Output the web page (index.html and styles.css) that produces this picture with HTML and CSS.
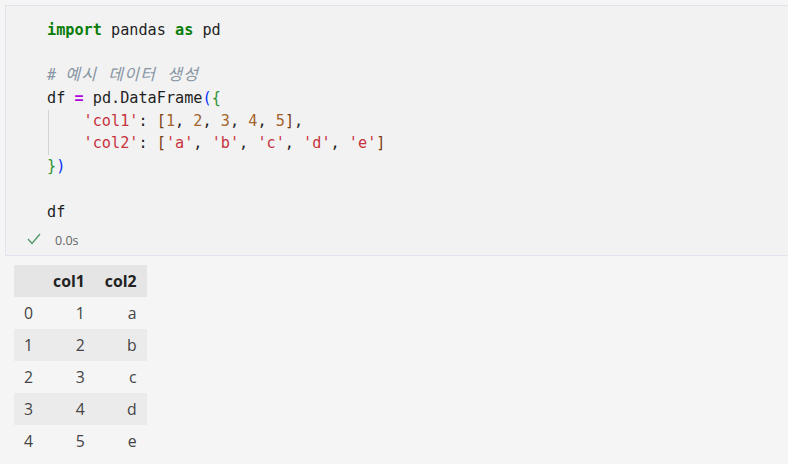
FILE: index.html
```html
<!DOCTYPE html>
<html lang="ko">
<head>
<meta charset="utf-8">
<title>Notebook cell</title>
<link rel="stylesheet" href="styles.css">
</head>
<body>
<div class="page">
  <div class="cell">
    <div class="code">
      <div class="line"><span class="kw">import</span> pandas <span class="kw">as</span> pd</div>
      <div class="line"> </div>
      <div class="line"><span class="cm"># <span class="ko">예시 데이터 생성</span></span></div>
      <div class="line">df <span class="op">=</span> pd.DataFrame<span class="p1">(</span><span class="p2">{</span></div>
      <div class="indent">
        <div class="line">    <span class="str">'col1'</span>: <span class="br">[</span><span class="num">1</span>, <span class="num">2</span>, <span class="num">3</span>, <span class="num">4</span>, <span class="num">5</span><span class="br">]</span>,</div>
        <div class="line">    <span class="str">'col2'</span>: <span class="br">[</span><span class="str">'a'</span>, <span class="str">'b'</span>, <span class="str">'c'</span>, <span class="str">'d'</span>, <span class="str">'e'</span><span class="br">]</span></div>
      </div>
      <div class="line"><span class="p2">}</span><span class="p1">)</span></div>
      <div class="line"> </div>
      <div class="line">df</div>
    </div>
    <div class="status">
      <svg class="check" width="14" height="12" viewBox="0 0 14 12"><polyline points="1,6 5,10.5 13,1" fill="none" stroke="#4b9a64" stroke-width="1.3"/></svg>
      <span class="time">0.0s</span>
    </div>
  </div>
  <div class="output">
    <table class="df">
      <thead>
        <tr><th></th><th>col1</th><th>col2</th></tr>
      </thead>
      <tbody>
        <tr><td class="idx">0</td><td>1</td><td>a</td></tr>
        <tr><td class="idx">1</td><td>2</td><td>b</td></tr>
        <tr><td class="idx">2</td><td>3</td><td>c</td></tr>
        <tr><td class="idx">3</td><td>4</td><td>d</td></tr>
        <tr><td class="idx">4</td><td>5</td><td>e</td></tr>
      </tbody>
    </table>
  </div>
</div>
</body>
</html>
```
FILE: styles.css
```css
html, body {
  margin: 0;
  padding: 0;
  background: #f5f5f5;
  overflow: hidden;
}
.page {
  padding: 5px 0 0 5px;
  width: 788px;
  box-sizing: border-box;
}
.cell {
  background: #f2f2f2;
  border: 1px solid #e3e3ee;
  margin-right: -30px;
  height: 251px;
  box-sizing: border-box;
}
.code {
  padding: 12.6px 0 0 41px;
  font-family: "DejaVu Sans Mono", "Noto Sans CJK KR", monospace;
  font-size: 15.2px;
  line-height: 22.75px;
  color: #1f1f1f;
}
.line {
  height: 22.75px;
  white-space: pre;
}
.indent {
  background: linear-gradient(#d4d4d4, #d4d4d4) no-repeat 1px 0 / 1px 100%;
}
.kw { color: #0b7d0b; font-weight: bold; }
.cm { color: #8795a3; font-style: italic; }
.ko { font-size: 16px; letter-spacing: 1.3px; }
.op { color: #af00db; font-weight: bold; }
.p1 { color: #0431fa; }
.p2 { color: #319331; }
.str { color: #c7333d; }
.num { color: #a3652c; }
.br { color: #7b3f14; }
.status {
  display: flex;
  align-items: center;
  height: 30px;
  padding-left: 21px;
}
.check {
  margin-top: 1px;
}
.time {
  margin-left: 14px;
  margin-top: 4px;
  font-family: "Open Sans", "Noto Sans", sans-serif;
  font-size: 12.5px;
  color: #666;
}
.output {
  padding: 9px 0 0 9px;
}
.df {
  border-collapse: collapse;
  font-family: "Open Sans", "Noto Sans", sans-serif;
  font-size: 15.8px;
  color: #333;
}
.df th, .df td {
  height: 32px;
  padding: 0 10px;
  text-align: right;
  box-sizing: border-box;
}
.df th {
  font-weight: 700;
  color: #222;
  background: #e5e5e5;
}
.df td.idx {
  text-align: left;
}
.df tbody tr:nth-child(even) {
  background: #ebebeb;
}
.df td {
  font-weight: 400;
  color: #444;
}
```
